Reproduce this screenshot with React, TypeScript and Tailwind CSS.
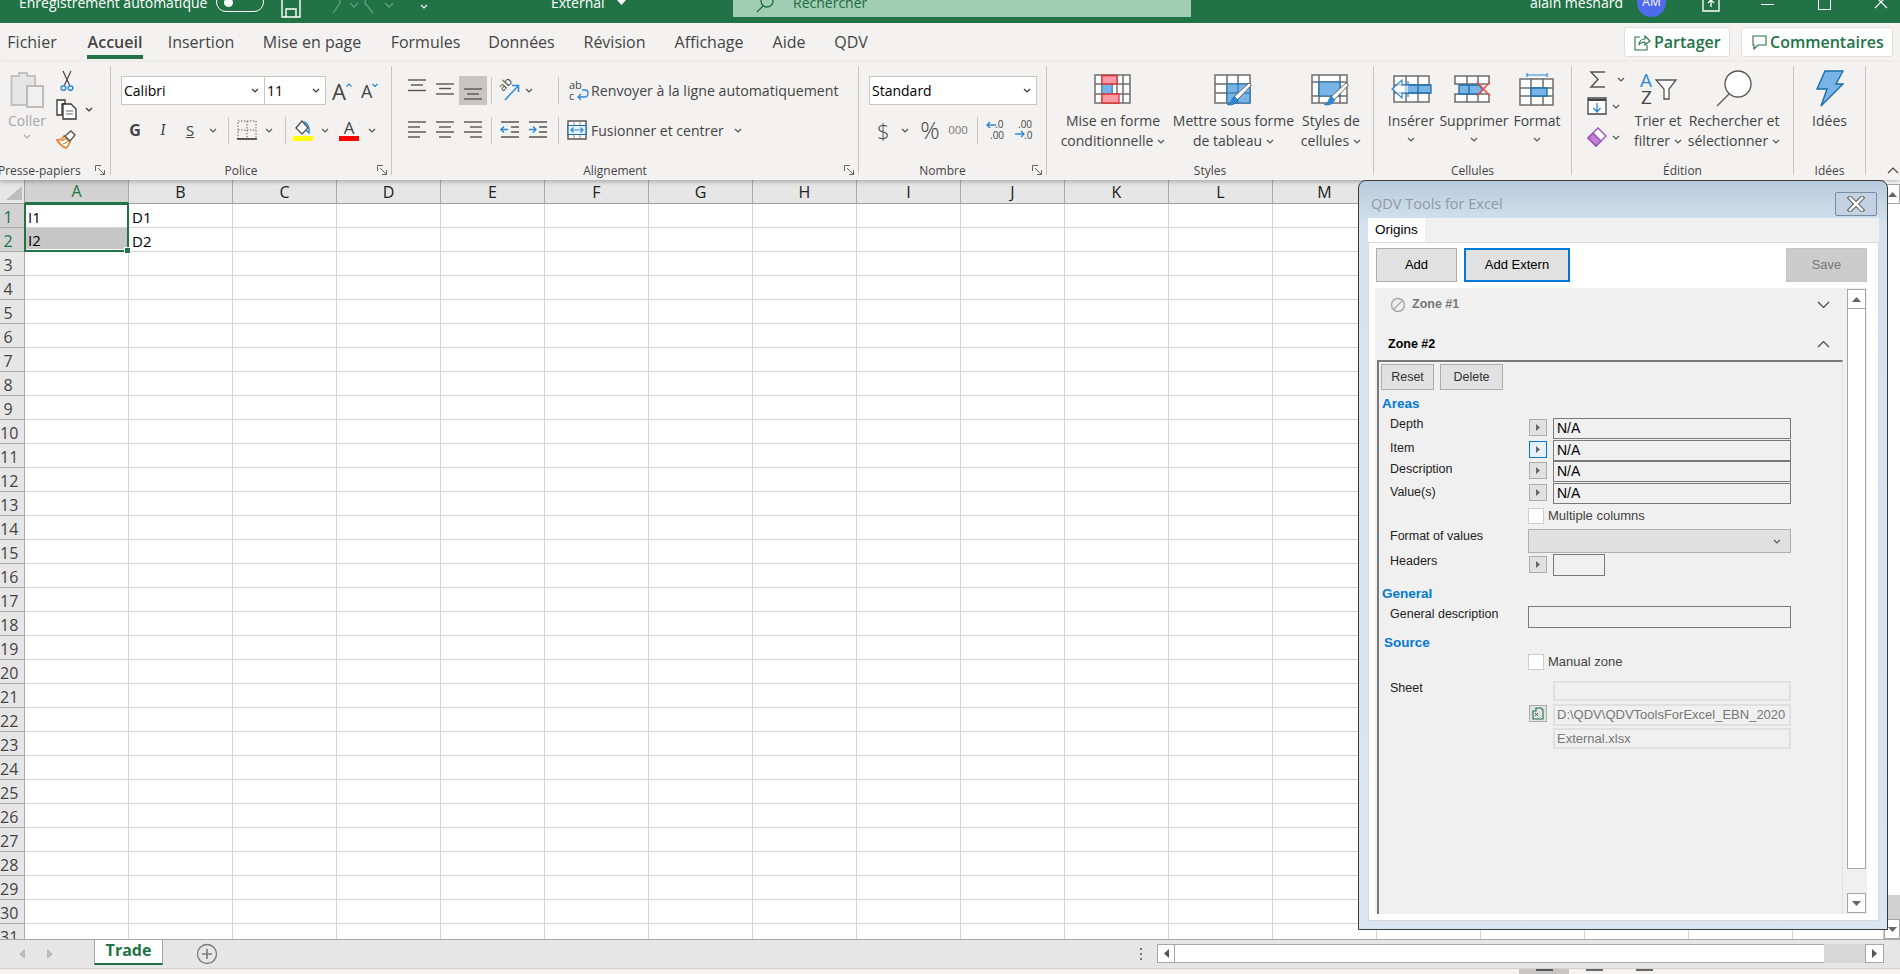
import type { ReactNode } from "react";

const COLS = ["A", "B", "C", "D", "E", "F", "G", "H", "I", "J", "K", "L", "M", "N", "O", "P", "Q", "R"];
const ROWS = Array.from({ length: 31 }, (_, i) => i + 1);
const TABS = [
  { label: "Fichier", cls: "ml-[7px] w-[50px]" },
  { label: "Accueil", cls: "ml-[31px] w-[54px]" },
  { label: "Insertion", cls: "ml-[26px] w-[66px]" },
  { label: "Mise en page", cls: "ml-[27px] w-[102px]" },
  { label: "Formules", cls: "ml-[28px] w-[69px]" },
  { label: "Données", cls: "ml-[28px] w-[67px]" },
  { label: "Révision", cls: "ml-[28px] w-[63px]" },
  { label: "Affichage", cls: "ml-[28px] w-[70px]" },
  { label: "Aide", cls: "ml-[28px] w-[34px]" },
  { label: "QDV", cls: "ml-[27px] w-[36px]" },
];

const BLUE = "#2b88d8";
const DEEP = "#1b6ea8";
const CELL = "#7ab4e6";

function Chev({ up, color = "#555" }: { up?: boolean; color?: string }) {
  return (
    <svg width="8" height="5" viewBox="0 0 8 5" className="shrink-0">
      <path d={up ? "M1 4l3-3 3 3" : "M1 1l3 3 3-3"} fill="none" stroke={color} strokeWidth="1.2" />
    </svg>
  );
}

function Launcher() {
  return (
    <svg width="11" height="11" viewBox="0 0 11 11" className="shrink-0">
      <path d="M.5 6V.5H6M3 3l6 6M5 9.500h4.500V5" fill="none" stroke="#666" />
    </svg>
  );
}

function Sep() {
  return <div className="h-[27px] w-px shrink-0 bg-[#c8c6c4]" />;
}

function Group({ className, label, launcher, footer, children }: { className: string; label?: string; launcher?: boolean; footer?: ReactNode; children: ReactNode }) {
  return (
    <div className={`flex h-[109px] shrink-0 flex-col border-r border-[#c8c6c4] ${className}`}>
      <div className="flex h-[100px] shrink-0">{children}</div>
      {footer ?? (
        <div className="flex h-[9px] items-center">
          <div className="flex-1 text-center text-[12px] leading-[10px] text-[#444]">{label}</div>
          {launcher && (
            <div className="flex w-[20px] justify-end pr-[3px]">
              <Launcher />
            </div>
          )}
        </div>
      )}
    </div>
  );
}

function Combo({ className, value }: { className: string; value: string }) {
  return (
    <div className={`flex h-[29px] shrink-0 items-center justify-between border border-[#c8c6c4] bg-white pl-[2px] pr-[5px] text-[14px] ${className}`}>
      <span>{value}</span>
      <Chev color="#333" />
    </div>
  );
}

function BigButton({ className, icon, lines, chev = "below" }: { className: string; icon: ReactNode; lines: string[]; chev?: "below" | "inline" | "none" }) {
  return (
    <div className={`flex shrink-0 flex-col items-center pt-[4px] ${className}`}>
      <div className="flex h-[37px] items-center">{icon}</div>
      <div className="mt-[4px] text-center text-[14px] leading-[20px] whitespace-nowrap text-[#444]">
        {lines.map((l, i) => (
          <div key={l} className="flex items-center justify-center gap-[4px]">
            {l}
            {chev === "inline" && i === lines.length - 1 && <Chev />}
          </div>
        ))}
        {chev === "below" && (
          <div className="flex h-[16px] items-center justify-center">
            <Chev />
          </div>
        )}
      </div>
    </div>
  );
}

function AlignIcon({ h, lines }: { h: number; lines: [number, number, number][] }) {
  return (
    <svg width="18" height={h} viewBox={`0 0 18 ${h}`} className="shrink-0">
      {lines.map(([x1, x2, y]) => (
        <path key={y} d={`M${x1} ${y}H${x2}`} stroke="#555" strokeWidth="1.4" />
      ))}
    </svg>
  );
}

// grid + whatever sits in it, 36x28 with room for a brush or top bar
function TableIcon({ grid, children, h = 34 }: { grid: string; children?: ReactNode; h?: number }) {
  return (
    <svg width="40" height={h} viewBox={`0 0 40 ${h}`} className="overflow-visible">
      <path d={grid} fill="#fff" stroke="#6e6e6e" strokeWidth="1.5" />
      {children}
    </svg>
  );
}

function Brush() {
  return (
    <>
      <path d="M37.500 9L25 22l-3 3-3-3 3-3L35 7z" fill="#fff" stroke="#666" strokeWidth="1" />
      <path d="M21 20.500c-3 .5-3 3.500-4 5-1 1.500-2 2.500-4 3 4 1.500 9 0 10.500-4.500z" fill={BLUE} stroke={DEEP} strokeWidth=".6" />
    </>
  );
}

function Clipboard() {
  return (
    <div className="flex w-[54px] shrink-0 flex-col items-center pt-[5px]">
      <svg width="35" height="37" viewBox="0 0 35 37">
        <path d="M1.500 5H9V2h8v3h8v29H1.500z" fill="#e6e6e6" stroke="#c2c2c2" strokeWidth="2" />
        <path d="M17 15h16v21H17z" fill="#f0f0f0" stroke="#bcbcbc" strokeWidth="2" />
      </svg>
      <div className="mt-[3px] text-[14px] leading-[20px] text-[#a6a6a6]">Coller</div>
      <div className="mt-[3px]">
        <Chev color="#aaa" />
      </div>
    </div>
  );
}

function ClipTools() {
  return (
    <div className="flex flex-col pt-[4px]">
      <svg width="14" height="21" viewBox="0 0 14 21" className="ml-[6px]">
        <path d="M3 1l6.500 14M11 1L4.500 15" stroke="#444" strokeWidth="1.200" />
        <circle cx="3.500" cy="18" r="2.300" fill="#fff" stroke={BLUE} strokeWidth="1.600" />
        <circle cx="10.500" cy="18" r="2.300" fill="#fff" stroke={BLUE} strokeWidth="1.600" />
      </svg>
      <div className="mt-[8px] flex items-center">
        <svg width="21" height="21" viewBox="0 0 21 21" className="ml-[2px]">
          <path d="M1 1h8v4H6v11H1z" fill="#fff" stroke="#333" strokeWidth="1.300" />
          <path d="M7 5h8l5 5v10H7z" fill="#fff" stroke="#333" strokeWidth="1.300" />
          <path d="M10 12h7M10 15h7" stroke="#666" />
        </svg>
        <div className="ml-[8px]">
          <Chev color="#333" />
        </div>
      </div>
      <svg width="20" height="19" viewBox="0 0 20 19" className="ml-[2px] mt-[10px]">
        <path d="M1 10c3 0 6-2 7-4l6 6c-1 2-2 5-4 6-3-1-7-5-9-8z" fill="#fff" stroke="#e8791d" strokeWidth="1.600" />
        <path d="M4.500 11c3-.5 5-2 6-3M7 14c2-.5 4-2 5-3" stroke="#e8791d" />
        <path d="M9 6l6-5 4 4-5 6z" fill="#fff" stroke="#555" strokeWidth="1.300" />
      </svg>
    </div>
  );
}

function TitleBar() {
  return (
    <div className="h-[23px] shrink-0 overflow-hidden bg-[#217346] text-white">
      <div className="-mt-[13px] flex h-[30px] items-center text-[14px]">
        <span className="ml-[19px] w-[189px] whitespace-nowrap">Enregistrement automatique</span>
        <div className="ml-[8px] flex h-[20px] w-[48px] items-center rounded-full border-[1.500px] border-white pl-[7px]">
          <div className="h-[9px] w-[9px] rounded-full bg-white" />
        </div>
        <svg width="20" height="28" viewBox="0 0 20 28" className="ml-[17px] mt-[3px]">
          <path d="M1 1h15l3 3v23H1zM5 27v-8h10v8" fill="none" stroke="#fff" strokeWidth="1.4" />
        </svg>
        <svg width="70" height="24" viewBox="0 0 70 24" className="ml-[24px] mt-[2px] opacity-30">
          <path d="M1 6c8-6 14 0 14 6L8 22M25 12l4 4 4-4M48 22l-8-10c0-6 6-12 14-6M60 12l4 4 4-4" fill="none" stroke="#fff" strokeWidth="1.300" />
        </svg>
        <div className="ml-[25px] mt-[8px]">
          <Chev color="#fff" />
        </div>
        <span className="ml-[123px] w-[60px]">External</span>
        <svg width="9" height="5" viewBox="0 0 9 5" className="ml-[6px]">
          <path d="M0 0h9L4.500 5z" fill="#fff" />
        </svg>
        <div className="ml-[107px] flex h-[30px] w-[458px] items-center bg-[#a0cdb4] text-[#1d6b40]">
          <svg width="20" height="20" viewBox="0 0 20 20" className="ml-[22px] mt-[2px]">
            <circle cx="12" cy="8" r="6" fill="none" stroke="#1d6b40" strokeWidth="1.300" />
            <path d="M8 13l-6 6" stroke="#1d6b40" strokeWidth="1.300" />
          </svg>
          <span className="ml-[18px]">Rechercher</span>
        </div>
        <span className="ml-[339px] w-[92px] whitespace-nowrap">alain meshard</span>
        <div className="ml-[15px] flex h-[29px] w-[29px] items-center justify-center rounded-full bg-[#4f6bed] text-[12px]">AM</div>
        <svg width="18" height="18" viewBox="0 0 18 18" className="ml-[36px] mt-[1px]">
          <path d="M1 6v11h16V6M9 13V6M6 9l3-3 3 3" fill="none" stroke="#fff" strokeWidth="1.300" />
        </svg>
        <div className="ml-[41px] mt-[4px] h-[1px] w-[13px] bg-white" />
        <div className="ml-[44px] h-[16px] w-[13px] border border-white" />
        <svg width="14" height="14" viewBox="0 0 14 14" className="ml-[43px]">
          <path d="M1 1l12 12M13 1L1 13" stroke="#fff" strokeWidth="1.200" />
        </svg>
      </div>
    </div>
  );
}

function TabRow() {
  return (
    <div className="flex h-[39px] shrink-0 bg-[#f3f2f1] text-[16px] text-[#444]">
      {TABS.map((t) => (
        <div key={t.label} className={`flex flex-col items-center whitespace-nowrap pt-[9px] ${t.cls} ${t.label === "Accueil" ? "font-semibold" : ""}`}>
          <span className="leading-[20px]">{t.label}</span>
          {t.label === "Accueil" && <div className="mt-[3px] h-[4px] w-[56px] shrink-0 bg-[#217346]" />}
        </div>
      ))}
      <div className="ml-auto mt-[4px] flex h-[30px] w-[106px] items-center rounded-[3px] border border-[#e1dfdd] bg-white pl-[9px] font-semibold text-[#217346]">
        <svg width="17" height="17" viewBox="0 0 17 17">
          <path d="M6 3H1v13h12v-5M5 11c0-4 3-6 6-6V2l5 5-5 4V8c-3 0-5 1-6 3z" fill="none" stroke="#217346" strokeWidth="1.100" />
        </svg>
        <span className="ml-[3px]">Partager</span>
      </div>
      <div className="ml-[11px] mr-[7px] mt-[4px] flex h-[30px] w-[152px] items-center rounded-[3px] border border-[#e1dfdd] bg-white pl-[10px] font-semibold text-[#217346]">
        <svg width="15" height="15" viewBox="0 0 15 15">
          <path d="M1 1h13v9H6l-4 4v-4H1z" fill="none" stroke="#217346" strokeWidth="1.100" />
        </svg>
        <span className="ml-[3px]">Commentaires</span>
      </div>
    </div>
  );
}

function Ribbon() {
  return (
    <div className="relative z-10 flex h-[118px] shrink-0 bg-[#f3f2f1] pt-[4px] shadow-[0_2px_4px_rgba(0,0,0,0.25)]">
      <Group
        className="w-[111px]"
        footer={
          <div className="flex h-[9px] items-center text-[12px] leading-[10px] text-[#444]">
            <span className="-ml-[2px] w-[84px] whitespace-nowrap">Presse-papiers</span>
            <div className="ml-[13px]">
              <Launcher />
            </div>
          </div>
        }
      >
        <Clipboard />
        <ClipTools />
      </Group>

      <Group className="w-[281px]" label="Police" launcher>
        <div className="flex flex-col pl-[10px] pt-[10px]">
          <div className="flex h-[29px] items-center">
            <Combo className="w-[144px]" value="Calibri" />
            <Combo className="w-[62px] -ml-px" value="11" />
            <div className="ml-[6px] flex w-[20px] items-start text-[22px] leading-none text-[#444]">
              A
              <svg width="6" height="4" viewBox="0 0 6 4" className="mt-[3px]">
                <path d="M.5 3.500L3 1l2.500 2.500" fill="none" stroke={BLUE} strokeWidth="1.200" />
              </svg>
            </div>
            <div className="ml-[9px] flex w-[20px] items-start text-[18px] leading-none text-[#444]">
              A
              <svg width="6" height="4" viewBox="0 0 6 4" className="mt-[1px]">
                <path d="M.5 1L3 3.500 5.500 1" fill="none" stroke={BLUE} strokeWidth="1.200" />
              </svg>
            </div>
          </div>
          <div className="mt-[10px] flex h-[30px] items-center text-[#444]">
            <div className="w-[28px] text-center text-[16px] font-bold">G</div>
            <div className="w-[28px] text-center font-serif text-[16px] italic">I</div>
            <div className="w-[26px] text-center text-[15px] underline">S</div>
            <div className="flex w-[20px] justify-center">
              <Chev />
            </div>
            <div className="ml-[5px]">
              <Sep />
            </div>
            <div className="flex w-[36px] justify-center">
              <svg width="20" height="20" viewBox="0 0 20 20">
                <path d="M1 1h18v18H1zM10 1v18M1 10h18" fill="none" stroke="#666" strokeDasharray="1.500 1.500" />
                <path d="M0 19h20" stroke="#333" strokeWidth="1.500" />
              </svg>
            </div>
            <div className="flex w-[8px] justify-center">
              <Chev />
            </div>
            <div className="ml-[12px]">
              <Sep />
            </div>
            <div className="flex w-[34px] flex-col items-center">
              <svg width="18" height="17" viewBox="0 0 18 17">
                <path d="M2 9l6-7 6 7-6 6z" fill="#fff" stroke="#444" strokeWidth="1.200" />
                <path d="M10 3c4 1 6 6 5 11l-3-3" fill="none" stroke={BLUE} strokeWidth="1.400" />
              </svg>
              <div className="h-[5px] w-[20px] bg-[#ffff00]" />
            </div>
            <div className="flex w-[10px] justify-center">
              <Chev />
            </div>
            <div className="flex w-[38px] flex-col items-center">
              <span className="h-[17px] text-[17px] leading-[17px]">A</span>
              <div className="h-[5px] w-[20px] bg-[#ff0000]" />
            </div>
            <div className="flex w-[8px] justify-center">
              <Chev />
            </div>
          </div>
        </div>
      </Group>

      <Group className="w-[467px]" label="Alignement" launcher>
        <div className="flex flex-col pl-[16px] pt-[10px]">
          <div className="flex h-[29px] items-center">
            <AlignIcon h={29} lines={[[0, 18, 4], [3, 15, 9], [0, 18, 14.500]]} />
            <div className="ml-[10px]">
              <AlignIcon h={29} lines={[[0, 18, 8], [3, 15, 12.500], [0, 18, 18]]} />
            </div>
            <div className="ml-[5px] flex h-[29px] w-[28px] justify-center bg-[#c8c6c4]">
              <AlignIcon h={29} lines={[[0, 18, 13], [3, 15, 18], [0, 18, 23]]} />
            </div>
            <div className="ml-[4px]">
              <Sep />
            </div>
            <svg width="20" height="20" viewBox="0 0 20 20" className="ml-[8px] overflow-visible">
              <text x="0" y="0" fontSize="12" fill="#444" transform="translate(3 11) rotate(-45)" fontFamily="Open Sans, sans-serif">
                ab
              </text>
              <path d="M5 19L18 5M12 4.500h6.500V11" fill="none" stroke={BLUE} strokeWidth="1.500" />
            </svg>
            <div className="ml-[5px] w-[8px]">
              <Chev />
            </div>
            <div className="ml-[25px]">
              <Sep />
            </div>
            <svg width="20" height="24" viewBox="0 0 20 24" className="ml-[10px]">
              <text x="0" y="10" fontSize="11" fill="#444" fontFamily="Open Sans, sans-serif">
                ab
              </text>
              <text x="0" y="21" fontSize="11" fill="#444" fontFamily="Open Sans, sans-serif">
                c
              </text>
              <path d="M13 11h3c2 0 3 1 3 3s-1 4-3 4H9M12 15l-3 3 3 3" fill="none" stroke={BLUE} strokeWidth="1.300" />
            </svg>
            <span className="ml-[2px] whitespace-nowrap text-[14.200px] text-[#444]">Renvoyer à la ligne automatiquement</span>
          </div>
          <div className="mt-[10px] flex h-[30px] items-center">
            <AlignIcon h={30} lines={[[0, 18, 7], [0, 12, 12], [0, 18, 17], [0, 12, 22]]} />
            <div className="ml-[10px]">
              <AlignIcon h={30} lines={[[0, 18, 7], [3, 15, 12], [0, 18, 17], [3, 15, 22]]} />
            </div>
            <div className="ml-[10px]">
              <AlignIcon h={30} lines={[[0, 18, 7], [6, 18, 12], [0, 18, 17], [6, 18, 22]]} />
            </div>
            <div className="ml-[9px]">
              <Sep />
            </div>
            <svg width="20" height="18" viewBox="0 0 20 18" className="ml-[8px]">
              <path d="M1 1h18M11 6h8M11 11h8M1 16h18" stroke="#555" strokeWidth="1.400" />
              <path d="M8 8.500H1M4 5.500l-3 3 3 3" fill="none" stroke={BLUE} strokeWidth="1.400" />
            </svg>
            <svg width="20" height="18" viewBox="0 0 20 18" className="ml-[8px]">
              <path d="M1 1h18M11 6h8M11 11h8M1 16h18" stroke="#555" strokeWidth="1.400" />
              <path d="M1 8.500h7M5 5.500l3 3-3 3" fill="none" stroke={BLUE} strokeWidth="1.400" />
            </svg>
            <div className="ml-[10px]">
              <Sep />
            </div>
            <svg width="21" height="20" viewBox="0 0 21 20" className="ml-[8px]">
              <path d="M1 1h18v18H1z" fill="#fff" stroke="#555" strokeWidth="1.400" />
              <path d="M1 5.500h18v9H1z" fill="#e5f1fb" stroke={DEEP} strokeWidth="1.200" />
              <path d="M7 1v4M13 1v4M7 15v4M13 15v4" stroke="#888" />
              <path d="M4 10h12M6.500 7.500L4 10l2.500 2.500M13.500 7.500L16 10l-2.500 2.500" fill="none" stroke={BLUE} strokeWidth="1.200" />
            </svg>
            <span className="ml-[3px] w-[129px] whitespace-nowrap text-[14px] text-[#444]">Fusionner et centrer</span>
            <div className="ml-[14px]">
              <Chev />
            </div>
          </div>
        </div>
      </Group>

      <Group className="w-[188px]" label="Nombre" launcher>
        <div className="flex flex-col pl-[10px] pt-[10px]">
          <Combo className="w-[168px]" value="Standard" />
          <div className="mt-[10px] flex h-[30px] items-center text-[#444]">
            <span className="ml-[8px] w-[12px] text-center text-[22px] font-light leading-none">$</span>
            <div className="ml-[12px] w-[8px]">
              <Chev />
            </div>
            <span className="ml-[11px] w-[20px] text-center text-[24px] font-light leading-none">%</span>
            <span className="ml-[8px] w-[20px] text-center text-[11.500px] text-[#777]">000</span>
            <div className="ml-[9px]">
              <Sep />
            </div>
            <svg width="19" height="20" viewBox="0 0 19 20" className="ml-[8px]">
              <path d="M10 5H1M4 2L1 5l3 3" fill="none" stroke={BLUE} strokeWidth="1.400" />
              <text x="9" y="8" fontSize="10" fill="#444" fontFamily="Open Sans, sans-serif">.0</text>
              <text x="4" y="19" fontSize="10" fill="#444" fontFamily="Open Sans, sans-serif">.00</text>
            </svg>
            <svg width="19" height="20" viewBox="0 0 19 20" className="ml-[9px]">
              <text x="4" y="8" fontSize="10" fill="#444" fontFamily="Open Sans, sans-serif">.00</text>
              <path d="M1 14h9M7 11l3 3-3 3" fill="none" stroke={BLUE} strokeWidth="1.400" />
              <text x="10" y="19" fontSize="10" fill="#444" fontFamily="Open Sans, sans-serif">.0</text>
            </svg>
          </div>
        </div>
      </Group>

      <Group className="w-[327px]" label="Styles">
        <BigButton
          className="ml-[10px] w-[112px]"
          lines={["Mise en forme", "conditionnelle"]}
          chev="inline"
          icon={
            <TableIcon h={30} grid="M2 1h35v28H2zM2 10h35M2 20h35M9 1v28M19 1v28M24 1v28M30 1v28">
              <path d="M9 10h10v10H9z" fill={CELL} stroke={BLUE} />
              <path d="M9 1.500h15V10H9zM9 20h17v9H9z" fill="#fa9ba6" stroke="#e03131" strokeWidth="1.300" />
            </TableIcon>
          }
        />
        <BigButton
          className="ml-[2px] w-[125px]"
          lines={["Mettre sous forme", "de tableau"]}
          chev="inline"
          icon={
            <TableIcon grid="M1 3h35v28H1zM1 12h35M1 21h35M13 3v28M24 3v28">
              <path d="M13 12h23v19H13zM24 12v19M13 21h23" fill={CELL} stroke={DEEP} strokeWidth="1" />
              <g transform="translate(0 4)">
                <Brush />
              </g>
            </TableIcon>
          }
        />
        <BigButton
          className="ml-[4px] w-[62px]"
          lines={["Styles de", "cellules"]}
          chev="inline"
          icon={
            <TableIcon grid="M1 3h35v28H1zM1 10h35M1 24h35M8 3v28M29 3v28">
              <path d="M8 10h21v14H8z" fill={CELL} stroke={DEEP} strokeWidth="1.200" />
              <g transform="translate(0 4)">
                <Brush />
              </g>
            </TableIcon>
          }
        />
      </Group>

      <Group className="w-[198px]" label="Cellules">
        <BigButton
          className="ml-[13px] w-[48px]"
          lines={["Insérer"]}
          icon={
            <TableIcon h={28} grid="M3 1h35v26H3zM3 10h35M3 18h35M15 1v26M27 1v26">
              <path d="M15 10h25v8H15zM27 10v8" fill={CELL} stroke={DEEP} strokeWidth="1.300" />
              <path d="M17 6v4h-6V5L1 14l10 9v-5h6v4" fill="#fff" fillOpacity=".6" stroke={BLUE} strokeWidth="1.200" />
            </TableIcon>
          }
        />
        <BigButton
          className="ml-[2px] w-[74px]"
          lines={["Supprimer"]}
          icon={
            <TableIcon h={28} grid="M1 1h34v8H1zM1 19h34v8H1zM13 1v8M24 1v8M13 19v8M24 19v8">
              <path d="M5 10h20l4 4.500-4 4.500H5zM15 10v9" fill={CELL} stroke={DEEP} strokeWidth="1.300" />
              <path d="M23 7l13 14M36 7L23 21" stroke="#f04b4b" strokeWidth="1.500" />
            </TableIcon>
          }
        />
        <BigButton
          className="ml-[2px] w-[48px]"
          lines={["Format"]}
          icon={
            <TableIcon h={32} grid="M3 6h33v26H3zM3 15h33M3 23h33M14 6v26M26 6v26">
              <path d="M14 15h16v8H14z" fill={CELL} stroke={DEEP} strokeWidth="1.300" />
              <path d="M10 2h20M10 0v4M30 0v4" stroke={BLUE} strokeWidth="1.200" />
            </TableIcon>
          }
        />
      </Group>

      <Group className="w-[222px]" label="Édition">
        <div className="ml-[15px] flex w-[40px] shrink-0 flex-col">
          <div className="mt-[2px] flex h-[22px] items-center">
            <svg width="18" height="19" viewBox="0 0 18 19" className="ml-[2px]">
              <path d="M16 2H2l7 7.500L2 17h14" fill="none" stroke="#555" strokeWidth="1.500" />
            </svg>
            <div className="ml-[10px]">
              <Chev />
            </div>
          </div>
          <div className="mt-[7px] flex h-[18px] items-center">
            <svg width="20" height="18" viewBox="0 0 20 18">
              <path d="M1 1h18v16H1z" fill="#fff" stroke="#444" strokeWidth="1.300" />
              <path d="M1 3h18" stroke="#444" strokeWidth="2" />
              <path d="M10 6v9M6.500 11l3.500 4 3.500-4" fill="none" stroke={BLUE} strokeWidth="1.300" />
            </svg>
            <div className="ml-[5px]">
              <Chev />
            </div>
          </div>
          <div className="mt-[12px] flex h-[20px] items-center">
            <svg width="20" height="20" viewBox="0 0 20 20">
              <path d="M1 11l10-10 8 8-10 10z" fill="#fff" stroke="#9a4fb3" strokeWidth="1.300" />
              <path d="M1 11l5-5 8 8-5 5z" fill="#c17fd6" stroke="#9a4fb3" strokeWidth="1.300" />
            </svg>
            <div className="ml-[5px]">
              <Chev />
            </div>
          </div>
        </div>
        <BigButton
          className="ml-[5px] w-[52px]"
          lines={["Trier et", "filtrer"]}
          chev="inline"
          icon={
            <svg width="37" height="34" viewBox="0 0 37 34">
              <text x="0" y="15" fontSize="19" fill={BLUE} fontFamily="Open Sans, sans-serif">A</text>
              <text x="1" y="32" fontSize="19" fill="#444" fontFamily="Open Sans, sans-serif">Z</text>
              <path d="M16 8h20l-7 9v10h-5V17z" fill="#fff" stroke="#555" strokeWidth="1.300" />
            </svg>
          }
        />
        <BigButton
          className="ml-[2px] w-[96px]"
          lines={["Rechercher et", "sélectionner"]}
          chev="inline"
          icon={
            <svg width="36" height="37" viewBox="0 0 36 37">
              <circle cx="22" cy="14" r="13" fill="#fff" stroke="#555" strokeWidth="1.300" />
              <path d="M13 24L1 36" stroke="#555" strokeWidth="1.300" />
            </svg>
          }
        />
      </Group>

      <Group className="w-[72px]" label="Idées">
        <BigButton
          className="w-full"
          lines={["Idées"]}
          chev="none"
          icon={
            <svg width="28" height="37" viewBox="0 0 28 37">
              <path d="M9 1h18l-7 13h7L5 36l6-17H1z" fill={CELL} stroke={DEEP} strokeWidth="1.400" />
            </svg>
          }
        />
      </Group>

      <div className="ml-[21px] mt-[101px]">
        <svg width="12" height="7" viewBox="0 0 12 7">
          <path d="M1 6l5-5 5 5" fill="none" stroke="#444" strokeWidth="1.200" />
        </svg>
      </div>
    </div>
  );
}

function Grid() {
  return (
    <div className="min-w-0 flex-1 overflow-hidden bg-white">
      <div className="flex h-[24px] bg-[#e6e6e6]">
        <div className="flex w-[25px] shrink-0 items-end border-b border-r border-[#9e9e9e] pb-[3px] pl-[6px]">
          <svg width="16" height="14" viewBox="0 0 16 14">
            <path d="M16 0v14H0z" fill="#bdbdbd" />
          </svg>
        </div>
        {COLS.map((c) => (
          <div
            key={c}
            className={`flex w-[104px] shrink-0 items-center justify-center border-r border-[#ababab] text-[16px] ${
              c === "A" ? "border-b-2 border-b-[#217346] bg-[#d2d2d2] text-[#217346]" : "border-b border-b-[#9e9e9e] text-[#222]"
            }`}
          >
            {c}
          </div>
        ))}
      </div>
      {ROWS.map((r) => (
        <div key={r} className="flex h-[24px]">
          <div className={`w-[25px] shrink-0 border-b border-r border-[#ababab] pr-[8px] text-center text-[16px] leading-[26px] ${r < 3 ? "bg-[#d2d2d2] text-[#217346]" : "bg-[#e6e6e6] text-[#444]"}`}>
            {r}
          </div>
          {COLS.map((c, ci) => {
            const a2 = r === 2 && ci === 0;
            return (
              <div key={c} className={`relative w-[104px] shrink-0 border-b border-r border-[#d4d4d4] text-[15px] leading-[26px] text-black ${a2 ? "" : "pl-[3px]"}`}>
                {r === 1 && ci === 0 && <span>I1</span>}
                {r < 3 && ci === 1 && <span>D{r}</span>}
                {a2 && <div className="mx-[1px] mb-[2px] h-[21px] bg-[#c6c6c6] pl-[2px] leading-[24px]">I2</div>}
                {r === 1 && ci === 0 && (
                  <div className="pointer-events-none absolute -left-[1px] top-[-1px] z-10 h-[49px] w-[105px] border-2 border-[#217346]">
                    <div className="absolute -bottom-[4px] -right-[4px] h-[7px] w-[7px] border border-white bg-[#217346]" />
                  </div>
                )}
              </div>
            );
          })}
        </div>
      ))}
    </div>
  );
}

function ScrollButton({ className, down }: { className?: string; down?: boolean }) {
  return (
    <div className={`flex h-[20px] shrink-0 items-center justify-center border border-[#a6a6a6] bg-white ${className ?? ""}`}>
      <svg width="9" height="5" viewBox="0 0 9 5">
        <path d={down ? "M0 0h9L4.500 5z" : "M0 5h9L4.500 0z"} fill="#666" />
      </svg>
    </div>
  );
}

function RefButton({ active, excel }: { active?: boolean; excel?: boolean }) {
  return (
    <div className={`flex h-[17px] w-[18px] shrink-0 items-center justify-center border ${active ? "border-[#0078d7] bg-[#e5f1fb]" : "border-[#adadad] bg-[#e1e1e1]"}`}>
      {excel ? (
        <svg width="13" height="13" viewBox="0 0 13 13">
          <path d="M1 4h3V1h5l2 2v9H1z" fill="none" stroke="#217346" strokeWidth="1.100" />
          <path d="M3 6l3 3M6 6L3 9" stroke="#217346" />
        </svg>
      ) : (
        <svg width="4" height="7" viewBox="0 0 4 7">
          <path d="M0 0l4 3.500L0 7z" fill="#666" />
        </svg>
      )}
    </div>
  );
}

function FormInput({ className, children, light }: { className: string; children?: ReactNode; light?: boolean }) {
  return (
    <div className={`flex items-center overflow-hidden whitespace-nowrap ${light ? "border-2 border-[#e0e0e0] pl-[2px] text-[13px] text-[#767676]" : "border border-[#7a7a7a] pl-[3px] text-[14px] text-black"} ${className}`}>
      {children}
    </div>
  );
}

function Check({ label }: { label: string }) {
  return (
    <div className="mt-[3px] flex h-[16px] items-center">
      <div className="ml-[149px] h-[16px] w-[16px] border border-[#cfcfcf] bg-white" />
      <span className="-mt-[1px] ml-[4px] text-[13px] text-[#444]">{label}</span>
    </div>
  );
}

function Heading({ children, className }: { children: string; className: string }) {
  return <div className={`h-[16px] text-[13.500px] font-bold leading-[16px] text-[#0078d7] ${className}`}>{children}</div>;
}

function Row({ className, label, labelClass, children }: { className: string; label?: string; labelClass?: string; children: ReactNode }) {
  return (
    <div className={`flex pl-[11px] ${className}`}>
      <div className={`h-[14px] w-[138px] shrink-0 text-[12.500px] leading-[14px] text-[#222] ${labelClass ?? ""}`}>{label}</div>
      {children}
    </div>
  );
}

function AreaRow({ className, label, labelClass, active }: { className: string; label: string; labelClass?: string; active?: boolean }) {
  return (
    <Row className={className} label={label} labelClass={labelClass}>
      <div className="ml-[1px] mt-[1px]">
        <RefButton active={active} />
      </div>
      <FormInput className="ml-[6px] h-[21px] w-[238px]">N/A</FormInput>
    </Row>
  );
}

function ZoneForm() {
  return (
    <div className="ml-[2px] mr-[4px] flex min-h-0 flex-1 flex-col border-l-2 border-r border-t-2 border-l-[#7a7a7a] border-r-[#e0e0e0] border-t-[#7a7a7a]">
      <div className="ml-[2px] mt-[2px] flex h-[26px] text-[12.500px] text-[#333]">
        <div className="flex w-[53px] items-center justify-center border border-[#adadad] bg-[#e1e1e1]">Reset</div>
        <div className="ml-[6px] flex w-[63px] items-center justify-center border border-[#adadad] bg-[#e1e1e1]">Delete</div>
      </div>
      <Heading className="ml-[3px] mt-[6px]">Areas</Heading>
      <AreaRow className="mt-[6px] h-[22px]" label="Depth" labelClass="-mt-[1px]" />
      <AreaRow className="h-[21px]" label="Item" labelClass="mt-[1px]" active />
      <AreaRow className="h-[22px]" label="Description" labelClass="mt-[1px]" />
      <AreaRow className="h-[22px]" label="Value(s)" labelClass="mt-[2px]" />
      <Check label="Multiple columns" />
      <Row className="mt-[5px] h-[24px]" label="Format of values">
        <div className="flex h-[24px] w-[263px] items-center justify-end border border-[#b0b0b0] bg-[#e0e0e0] pr-[9px]">
          <Chev />
        </div>
      </Row>
      <Row className="mt-[1px] h-[22px]" label="Headers">
        <div className="ml-[1px] mt-[2px]">
          <RefButton />
        </div>
        <FormInput className="ml-[6px] h-[22px] w-[52px]" />
      </Row>
      <Heading className="ml-[3px] mt-[10px]">General</Heading>
      <Row className="mt-[4px] h-[22px]" label="General description" labelClass="mt-[1px]">
        <FormInput className="h-[22px] w-[263px]" />
      </Row>
      <Heading className="ml-[5px] mt-[7px]">Source</Heading>
      <Check label="Manual zone" />
      <Row className="mt-[11px] h-[20px]" label="Sheet">
        <FormInput className="ml-[25px] h-[20px] w-[238px]" light />
      </Row>
      <Row className="mt-[3px] h-[22px]">
        <div className="ml-[1px] mt-[1px]">
          <RefButton excel />
        </div>
        <FormInput className="ml-[6px] h-[22px] w-[238px]" light>
          D:\QDV\QDVToolsForExcel_EBN_2020
        </FormInput>
      </Row>
      <Row className="mt-[2px] h-[21px]">
        <FormInput className="ml-[25px] h-[21px] w-[238px]" light>
          External.xlsx
        </FormInput>
      </Row>
    </div>
  );
}

function Dialog() {
  return (
    <div className="absolute left-[1358px] top-[180px] z-20 flex h-[750px] w-[530px] flex-col rounded-t-[8px] border border-[#3a3a3a] bg-gradient-to-b from-[#b8cbdc] from-0% via-[#d5e3f0] via-[6%] to-[#d9e6f2] font-['Liberation_Sans',sans-serif]">
      <div className="flex h-[37px] shrink-0 items-start justify-between pl-[12px] pr-[10px] pt-[11px]">
        <span className="font-['Open_Sans',sans-serif] text-[14.500px] leading-[24px] text-[#8f9aa3]">QDV Tools for Excel</span>
        <div className="flex h-[24px] w-[42px] items-center justify-center rounded-[2px] border border-[#7a8ba3] bg-[#c3d2e2]">
          <svg width="18" height="16" viewBox="0 0 18 16">
            <path d="M3 2l12 12M15 2L3 14" stroke="#555" strokeWidth="4.500" strokeLinecap="square" />
            <path d="M3 2l12 12M15 2L3 14" stroke="#fff" strokeWidth="2.500" strokeLinecap="square" />
          </svg>
        </div>
      </div>
      <div className="mb-[8px] ml-[9px] mr-[8px] flex min-h-0 flex-1 flex-col bg-[#f0f0f0]">
        <div className="flex h-[24px] shrink-0">
          <div className="flex w-[57px] items-center justify-center bg-white text-[13.500px] text-black">Origins</div>
        </div>
        <div className="flex min-h-0 flex-1 flex-col border border-[#d9d9d9] bg-white pl-[6px] pr-[11px] pt-[5px]">
          <div className="flex h-[34px] shrink-0 text-[13px]">
            <div className="ml-[1px] flex w-[81px] items-center justify-center border border-[#adadad] bg-[#e1e1e1] text-black">Add</div>
            <div className="ml-[7px] flex w-[106px] items-center justify-center border-2 border-[#0078d7] bg-[#e1e1e1] text-black">Add Extern</div>
            <div className="ml-auto flex w-[81px] items-center justify-center border border-[#c4c4c4] bg-[#cccccc] text-[#777]">Save</div>
          </div>
          <div className="mt-[6px] flex h-[626px] shrink-0 bg-[#f0f0f0]">
            <div className="flex w-[472px] shrink-0 flex-col">
              <div className="flex h-[33px] shrink-0 items-center pl-[15px] pr-[17px] text-[#777]">
                <svg width="16" height="16" viewBox="0 0 16 16">
                  <circle cx="8" cy="8" r="6.500" fill="none" stroke="#aaa" strokeWidth="1.500" />
                  <path d="M3.500 12.500l9-9" stroke="#aaa" strokeWidth="1.500" />
                </svg>
                <span className="ml-[6px] text-[12.500px] font-bold">Zone #1</span>
                <svg width="13" height="8" viewBox="0 0 13 8" className="ml-auto">
                  <path d="M1 1l5.500 5.500L12 1" fill="none" stroke="#444" strokeWidth="1.200" />
                </svg>
              </div>
              <div className="mt-[7px] flex h-[32px] shrink-0 items-center pl-[13px] pr-[17px] text-black">
                <span className="text-[12.500px] font-bold">Zone #2</span>
                <svg width="13" height="8" viewBox="0 0 13 8" className="ml-auto">
                  <path d="M1 7l5.500-5.500L12 7" fill="none" stroke="#444" strokeWidth="1.200" />
                </svg>
              </div>
              <ZoneForm />
            </div>
            <div className="flex flex-col pt-[1px]">
              <ScrollButton className="w-[19px]" />
              <div className="h-[560px] w-[19px] border-x border-b border-[#a6a6a6] bg-white" />
              <ScrollButton className="mt-[24px] w-[19px]" down />
            </div>
          </div>
        </div>
      </div>
    </div>
  );
}

function SheetBar() {
  return (
    <div className="flex h-[29px] shrink-0 border-t border-[#a6a6a6] bg-[#e6e6e6]">
      <svg width="6" height="10" viewBox="0 0 6 10" className="ml-[19px] mt-[9px]">
        <path d="M6 0v10L0 5z" fill="#bbb" />
      </svg>
      <svg width="6" height="10" viewBox="0 0 6 10" className="ml-[22px] mt-[9px]">
        <path d="M0 0v10l6-5z" fill="#bbb" />
      </svg>
      <div className="ml-[41px] flex h-[25px] w-[69px] items-center justify-center border-b-2 border-l border-r border-[#a6a6a6] border-b-[#217346] bg-white pb-[4px] text-[16px] font-bold text-[#217346]">Trade</div>
      <svg width="22" height="22" viewBox="0 0 22 22" className="ml-[33px] mt-[3px]">
        <circle cx="11" cy="11" r="9.500" fill="none" stroke="#7a7a7a" strokeWidth="1.300" />
        <path d="M11 6v10M6 11h10" stroke="#7a7a7a" strokeWidth="1.600" />
      </svg>
      <div className="ml-[922px] mt-[8px] flex h-[12px] w-[2px] flex-col justify-between">
        <div className="h-[2px] w-[2px] bg-[#777]" />
        <div className="h-[2px] w-[2px] bg-[#777]" />
        <div className="h-[2px] w-[2px] bg-[#777]" />
      </div>
      <div className="ml-[15px] mt-[4px] flex h-[19px]">
        <div className="flex w-[18px] items-center justify-center border border-[#a6a6a6] bg-white">
          <svg width="5" height="9" viewBox="0 0 5 9">
            <path d="M5 0v9L0 4.500z" fill="#555" />
          </svg>
        </div>
        <div className="w-[649px] border-y border-[#a6a6a6] bg-white" />
        <div className="w-[41px] bg-[#d8d8d8]" />
        <div className="flex w-[19px] items-center justify-center border border-[#a6a6a6] bg-white">
          <svg width="5" height="9" viewBox="0 0 5 9">
            <path d="M0 0v9l5-4.500z" fill="#555" />
          </svg>
        </div>
      </div>
    </div>
  );
}

function StatusBar() {
  return (
    <div className="flex h-[6px] shrink-0 overflow-hidden border-t border-[#d0d0d0] bg-[#f3f2f1] pl-[1519px]">
      <div className="flex h-full w-[50px] justify-center bg-[#c8c6c4]">
        <div className="h-[2px] w-[17px] bg-[#555]" />
      </div>
      <div className="flex w-[50px] justify-center">
        <div className="h-[2px] w-[17px] bg-[#666]" />
      </div>
      <div className="flex w-[50px] justify-center">
        <div className="h-[2px] w-[17px] bg-[#666]" />
      </div>
    </div>
  );
}

export default function App() {
  return (
    <div className="relative flex h-[974px] w-[1900px] flex-col overflow-hidden bg-[#f3f2f1] font-['Open_Sans',sans-serif]">
      <TitleBar />
      <TabRow />
      <Ribbon />
      <div className="flex min-h-0 flex-1">
        <Grid />
        <div className="flex w-[17px] shrink-0 flex-col border-l border-[#d0d0d0] bg-white">
          <ScrollButton className="mt-[4px] w-full" />
          <div className="flex-1" />
          <div className="h-[24px] bg-[#d0d0d0]" />
          <ScrollButton className="w-full" down />
        </div>
      </div>
      <SheetBar />
      <StatusBar />
      <Dialog />
    </div>
  );
}
